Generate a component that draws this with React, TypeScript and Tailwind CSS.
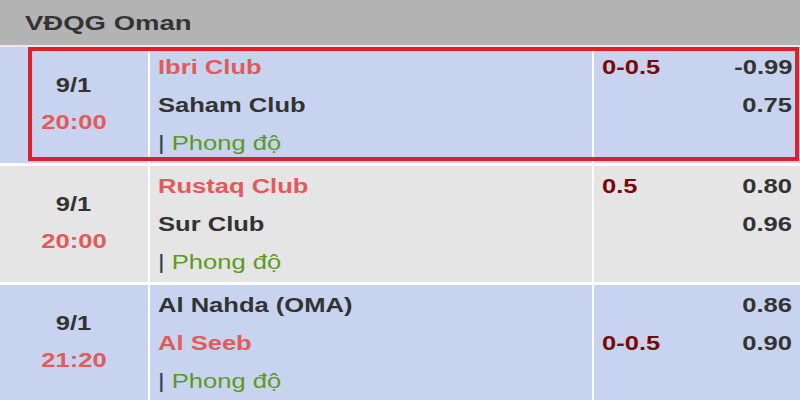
import React from "react";

type Match = {
  date: string;
  time: string;
  home: string;
  away: string;
  fav: "home" | "away";
  line: string;
  oddsHome: string;
  oddsAway: string;
  bg: string;
};

const matches: Match[] = [
  {
    date: "9/1",
    time: "20:00",
    home: "Ibri Club",
    away: "Saham Club",
    fav: "home",
    line: "0-0.5",
    oddsHome: "-0.99",
    oddsAway: "0.75",
    bg: "bg-[#c8d4ef]",
  },
  {
    date: "9/1",
    time: "20:00",
    home: "Rustaq Club",
    away: "Sur Club",
    fav: "home",
    line: "0.5",
    oddsHome: "0.80",
    oddsAway: "0.96",
    bg: "bg-[#e5e5e5]",
  },
  {
    date: "9/1",
    time: "21:20",
    home: "Al Nahda (OMA)",
    away: "Al Seeb",
    fav: "away",
    line: "0-0.5",
    oddsHome: "0.86",
    oddsAway: "0.90",
    bg: "bg-[#c8d4ef]",
  },
];

// the source shot is stretched sideways, so glyphs get widened too
function Wide({
  children,
  origin = "left",
  className = "",
}: {
  children: React.ReactNode;
  origin?: "left" | "right" | "center";
  className?: string;
}) {
  const o =
    origin === "left"
      ? "origin-left"
      : origin === "right"
        ? "origin-right"
        : "origin-center";
  return (
    <span className={`inline-block scale-x-[1.31] whitespace-nowrap ${o} ${className}`}>
      {children}
    </span>
  );
}

function MatchRow({ m }: { m: Match }) {
  const red = "text-[#e35a5a]";
  const dark = "text-[#333333]";
  return (
    <div className="grid h-[116px] grid-cols-[148px_442px_1fr] gap-x-[2px] bg-white">
      <div className={`${m.bg} flex flex-col items-center justify-center pb-[2px] font-bold`}>
        <div className="h-[37px] leading-[37px]">
          <Wide origin="center" className={dark}>{m.date}</Wide>
        </div>
        <div className="h-[37px] leading-[37px]">
          <Wide origin="center" className={red}>{m.time}</Wide>
        </div>
      </div>

      <div className={`${m.bg} flex flex-col py-px pl-2`}>
        <div className="h-[38px] leading-[38px] font-bold">
          <Wide className={m.fav === "home" ? red : dark}>{m.home}</Wide>
        </div>
        <div className="h-[38px] leading-[38px] font-bold">
          <Wide className={m.fav === "away" ? red : dark}>{m.away}</Wide>
        </div>
        <div className="h-[38px] leading-[38px]">
          <Wide>
            <span className="text-[#333a55]">|</span>{" "}
            <span className="text-[#5b9b1b]">Phong độ</span>
          </Wide>
        </div>
      </div>

      <div className={`${m.bg} flex flex-col py-px pl-2 pr-2 font-bold`}>
        <div className="flex h-[38px] items-center justify-between leading-[38px]">
          <Wide className="text-[#7a0808]">{m.fav === "home" ? m.line : ""}</Wide>
          <Wide origin="right" className={dark}>{m.oddsHome}</Wide>
        </div>
        <div className="flex h-[38px] items-center justify-between leading-[38px]">
          <Wide className="text-[#7a0808]">{m.fav === "away" ? m.line : ""}</Wide>
          <Wide origin="right" className={dark}>{m.oddsAway}</Wide>
        </div>
      </div>
    </div>
  );
}

export default function App() {
  return (
    <div
      className="relative h-[400px] w-[800px] overflow-hidden bg-white text-[19.5px]"
      style={{ fontFamily: '"Liberation Sans", Arial, sans-serif' }}
    >
      <div className="flex h-[45px] items-center bg-[#b3b3b3] pl-[25px]">
        <Wide className="text-[21px] font-bold text-[#333333]">VĐQG Oman</Wide>
      </div>
      <div className="h-[2px] bg-[#f3e6ea]" />

      <div className="flex flex-col gap-[3px]">
        {matches.map((m, i) => (
          <MatchRow key={i} m={m} />
        ))}
      </div>

      {/* red highlight around the first match */}
      <div className="pointer-events-none absolute left-[28px] top-[47px] h-[114px] w-[771px] border-[4px] border-[#e01f2d]" />
    </div>
  );
}
